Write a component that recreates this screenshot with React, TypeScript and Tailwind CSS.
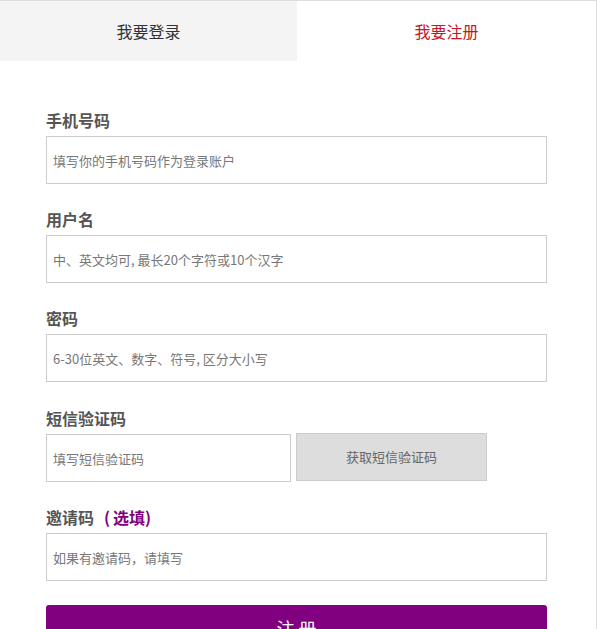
import React from "react";

const font = { fontFamily: '"Noto Sans CJK SC", "Noto Sans", sans-serif' };

function Field({ label, extra, placeholder, mb = "mb-[23px]" }: { label: string; extra?: React.ReactNode; placeholder: string; mb?: string }) {
  return (
    <div className={mb}>
      <div className="h-6 leading-6 text-base font-bold text-[#555] mb-1">
        {label}
        {extra}
      </div>
      <input
        className="block w-[501px] h-12 border border-[#ccc] px-[6px] text-[13px] text-[#555] placeholder:text-[#777] outline-none"
        placeholder={placeholder}
      />
    </div>
  );
}

export default function App() {
  return (
    <div className="w-[597px] h-[629px] overflow-hidden bg-white border-t border-r border-[#ddd]" style={font}>
      <div className="flex h-[60px]">
        <div className="w-[297px] flex items-center justify-center bg-[#f4f4f4] text-base text-[#333]">我要登录</div>
        <div className="flex-1 flex items-center justify-center bg-white text-base text-[#c81623]">我要注册</div>
      </div>
      <div className="pl-[46px] pt-[47px]">
        <Field label="手机号码" placeholder="填写你的手机号码作为登录账户" />
        <Field label="用户名" placeholder="中、英文均可, 最长20个字符或10个汉字" />
        <Field label="密码" placeholder="6-30位英文、数字、符号, 区分大小写" mb="mb-6" />
        <div className="mb-[23px]">
          <div className="h-6 leading-6 text-base font-bold text-[#555] mb-1">短信验证码</div>
          <div className="flex items-start gap-[5px]">
            <input
              className="block w-[245px] h-12 border border-[#ccc] px-[6px] text-[13px] text-[#555] placeholder:text-[#777] outline-none"
              placeholder="填写短信验证码"
            />
            <button className="-mt-px w-[191px] h-12 bg-[#ddd] border border-[#ccc] text-[13px] text-[#666]">获取短信验证码</button>
          </div>
        </div>
        <Field
          label="邀请码"
          placeholder="如果有邀请码，请填写"
          mb="mb-6"
          extra={<span className="text-[#800080] ml-[10px]">(<span className="ml-[3px]">选填)</span></span>}
        />
        <button className="block w-[501px] h-[46px] rounded-[3px] bg-[#800080] text-white text-lg">注 册</button>
      </div>
    </div>
  );
}
